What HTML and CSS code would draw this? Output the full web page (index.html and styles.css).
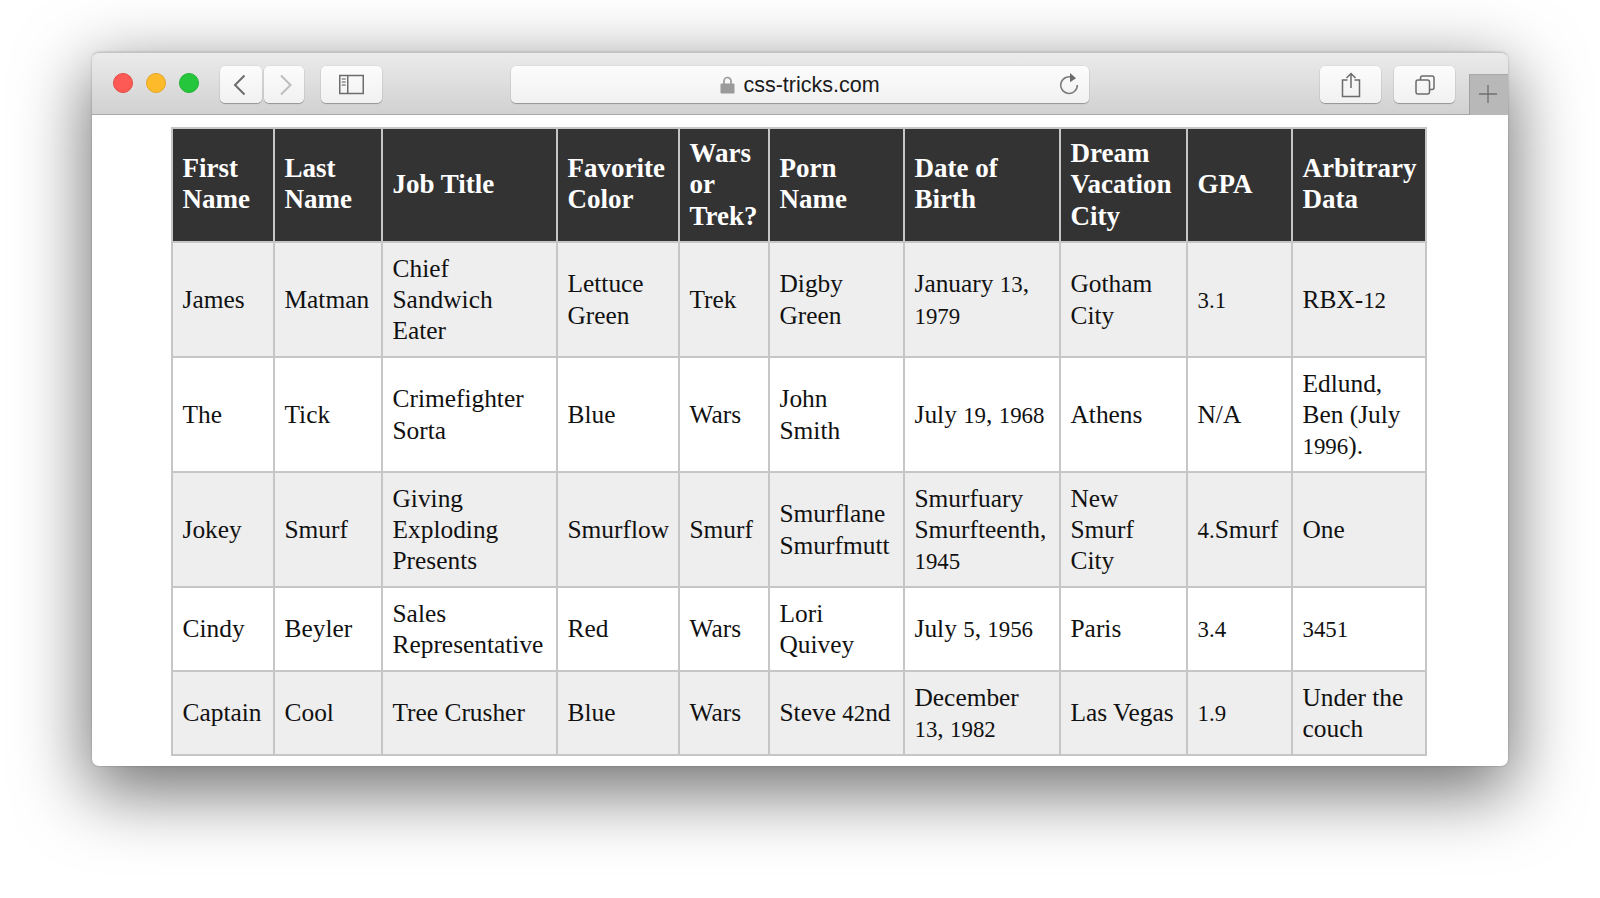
FILE: index.html
```html
<!DOCTYPE html>
<html lang="en">
<head>
<meta charset="utf-8">
<title>css-tricks.com</title>
<link rel="stylesheet" href="styles.css">
</head>
<body>
<div class="window">
  <header class="toolbar">
    <div class="lights"><span class="light red"></span><span class="light yellow"></span><span class="light green"></span></div>
    <div class="nav">
      <button class="btn back"><svg width="16" height="22" viewBox="0 0 16 22"><path d="M11.500 1.500 2 11l9.500 9.500" fill="none" stroke="#6c6c6c" stroke-width="2"/></svg></button>
      <button class="btn forward"><svg width="16" height="22" viewBox="0 0 16 22"><path d="M5 1.500 14.500 11 5 20.500" fill="none" stroke="#bdbdbd" stroke-width="2"/></svg></button>
    </div>
    <button class="btn sidebar"><svg width="26" height="21" viewBox="0 0 26 21"><rect x="0.750" y="1.500" width="23.500" height="18" fill="none" stroke="#6c6c6c" stroke-width="1.500"/><path d="M8.750 1v19" stroke="#6c6c6c" stroke-width="1.500"/><path d="M2.750 5h4M2.750 8h4M2.750 11h4" stroke="#8a8a8a" stroke-width="1.500"/></svg></button>
    <div class="address">
      <svg class="lock" width="15" height="18" viewBox="0 0 15 18"><path d="M4 8V5a3.500 3.500 0 0 1 7 0v3" fill="none" stroke="#9a9a9a" stroke-width="1.700"/><rect x="0.500" y="7.500" width="14" height="10" rx="1" fill="#9a9a9a"/></svg>
      <span class="url">css-tricks.com</span>
      <svg class="reload" width="22" height="24" viewBox="0 0 22 24"><path d="M15.500 6.200A8.300 8.300 0 1 0 19.300 13" fill="none" stroke="#7a7a7a" stroke-width="1.500"/><path d="M12 1l6 5.200-6 4z" fill="#6c6c6c"/></svg>
    </div>
    <button class="btn tool share"><svg width="20" height="26" viewBox="0 0 20 26"><path d="M6.500 8H1.500v16.500h17V8h-5" fill="none" stroke="#6c6c6c" stroke-width="1.500"/><path d="M10 16V2M5.500 6 10 1.500 14.500 6" fill="none" stroke="#6c6c6c" stroke-width="1.500"/></svg></button>
    <button class="btn tool tabs"><svg width="20" height="20" viewBox="0 0 20 20"><rect x="1" y="5" width="13.500" height="14" rx="2" fill="none" stroke="#6c6c6c" stroke-width="1.500"/><path d="M5.500 5V3a2 2 0 0 1 2-2H17a2 2 0 0 1 2 2v9.500a2 2 0 0 1-2 2h-2.500" fill="none" stroke="#6c6c6c" stroke-width="1.500"/></svg></button>
    <div class="newtab"><svg width="18" height="18" viewBox="0 0 18 18"><path d="M9 0v18M0 9h18" stroke="#6f6f6f" stroke-width="1.300"/></svg></div>
  </header>
  <main class="page">
    <table class="data">
      <colgroup>
        <col class="c1"><col class="c2"><col class="c3"><col class="c4"><col class="c5"><col class="c6"><col class="c7"><col class="c8"><col class="c9"><col class="c10">
      </colgroup>
      <thead>
        <tr class="r-head"><th>First Name</th><th>Last Name</th><th class="mid">Job Title</th><th>Favorite Color</th><th class="mid">Wars or Trek?</th><th>Porn Name</th><th>Date of Birth</th><th class="mid">Dream Vacation City</th><th class="mid">GPA</th><th>Arbitrary Data</th></tr>
      </thead>
      <tbody>
        <tr class="r-tall"><td>James</td><td>Matman</td><td>Chief Sandwich Eater</td><td>Lettuce Green</td><td>Trek</td><td>Digby Green</td><td>January <span class="fig">13</span>, <span class="fig">1979</span></td><td>Gotham City</td><td><span class="fig">3.1</span></td><td>RBX-<span class="fig">12</span></td></tr>
        <tr class="r-tall"><td>The</td><td>Tick</td><td>Crimefighter Sorta</td><td>Blue</td><td>Wars</td><td>John Smith</td><td>July <span class="fig">19</span>, <span class="fig">1968</span></td><td>Athens</td><td>N/A</td><td>Edlund, Ben (July <span class="fig">1996</span>).</td></tr>
        <tr class="r-tall"><td>Jokey</td><td>Smurf</td><td>Giving Exploding Presents</td><td>Smurflow</td><td>Smurf</td><td>Smurflane Smurfmutt</td><td>Smurfuary Smurfteenth, <span class="fig">1945</span></td><td>New Smurf City</td><td><span class="fig">4.</span>Smurf</td><td>One</td></tr>
        <tr class="r-short"><td>Cindy</td><td>Beyler</td><td>Sales Representative</td><td>Red</td><td>Wars</td><td>Lori Quivey</td><td>July <span class="fig">5</span>, <span class="fig">1956</span></td><td>Paris</td><td><span class="fig">3.4</span></td><td><span class="fig">3451</span></td></tr>
        <tr class="r-short"><td>Captain</td><td>Cool</td><td>Tree Crusher</td><td>Blue</td><td>Wars</td><td>Steve <span class="fig">42</span>nd</td><td>December <span class="fig">13</span>, <span class="fig">1982</span></td><td>Las Vegas</td><td><span class="fig">1.9</span></td><td>Under the couch</td></tr>
      </tbody>
    </table>
  </main>
</div>
</body>
</html>
```
FILE: styles.css
```css
* { box-sizing: border-box; }
html, body { margin: 0; height: 100%; background: #fff; }
body { padding: 52px 92px 0; overflow: hidden; }
.window {
  width: 1416px;
  height: 714px;
  border-radius: 7px;
  display: flex;
  flex-direction: column;
  background: #fff;
  box-shadow: 0 22px 70px 4px rgba(0,0,0,.56), 0 0 2px rgba(0,0,0,.3);
}
.toolbar {
  position: relative;
  height: 63px;
  flex: none;
  display: flex;
  align-items: flex-start;
  padding-top: 13px;
  border-radius: 7px 7px 0 0;
  border-top: 1px solid #c4c4c4;
  border-bottom: 1px solid #a8a8a8;
  background: linear-gradient(#ebebeb, #d1d1d1);
}
.lights { display: flex; gap: 13px; margin: 7px 0 0 21px; }
.light { width: 20px; height: 20px; border-radius: 50%; }
.red { background: #fd5a56; border: 1px solid #e5483f; }
.yellow { background: #fdbb2c; border: 1px solid #e3a426; }
.green { background: #25c53c; border: 1px solid #1fb232; }
.btn {
  display: flex;
  align-items: center;
  justify-content: center;
  height: 37px;
  padding: 0;
  border: 0;
  border-radius: 5px;
  background: linear-gradient(#fcfcfc, #f1f1f1);
  box-shadow: 0 1px 1px rgba(0,0,0,.28), 0 0 0 .5px rgba(0,0,0,.08);
}
.nav { display: flex; gap: 2px; margin-left: 21px; }
.back { width: 42px; }
.forward { width: 40px; }
.sidebar { width: 61px; margin-left: 17px; }
.address {
  position: relative;
  display: flex;
  align-items: center;
  justify-content: center;
  gap: 8px;
  width: 578px;
  height: 37px;
  margin-left: 129px;
  border-radius: 5px;
  background: linear-gradient(#fcfcfc, #f1f1f1);
  box-shadow: 0 1px 1px rgba(0,0,0,.28), 0 0 0 .5px rgba(0,0,0,.08);
}
.url { font: 21.500px/24px "Liberation Sans", Arial, sans-serif; color: #1a1a1a; }
.reload { position: absolute; right: 9px; top: 6px; }
.tool { width: 61px; }
.share { margin-left: 231px; }
.tabs { margin-left: 13px; }
.newtab {
  position: absolute;
  right: 0;
  bottom: -1px;
  width: 39px;
  height: 41px;
  display: flex;
  align-items: center;
  justify-content: center;
  padding: 0 2px 2px 0;
  background: #b8b8b8;
  border-left: 1px solid #a0a0a0;
  border-top: 1px solid #a8a8a8;
}
.page { flex: 1; padding: 12px 0 0 79px; }
.data {
  table-layout: fixed;
  width: 1254px;
  border-collapse: collapse;
  font-family: "Liberation Serif", "Times New Roman", serif;
  font-size: 25.400px;
  line-height: 31.300px;
  color: #111;
}
.c1 { width: 102px; } .c2 { width: 108px; } .c3 { width: 175px; } .c4 { width: 122px; } .c5 { width: 90px; }
.c6 { width: 135px; } .c7 { width: 156px; } .c8 { width: 127px; } .c9 { width: 105px; } .c10 { width: 134px; }
th, td { border: 2px solid #c6c6c6; padding: 0 9px 0 9.500px; text-align: left; vertical-align: middle; }
th { background: #333; color: #fff; font-size: 27px; font-weight: bold; padding-bottom: 2px; }
th.mid { padding-bottom: 0; }
tbody tr:nth-child(odd) td { background: #eee; }
.fig { font-size: .9em; line-height: 1; }
.r-head { height: 114px; }
.r-tall { height: 115px; }
.r-short { height: 84px; }
```
